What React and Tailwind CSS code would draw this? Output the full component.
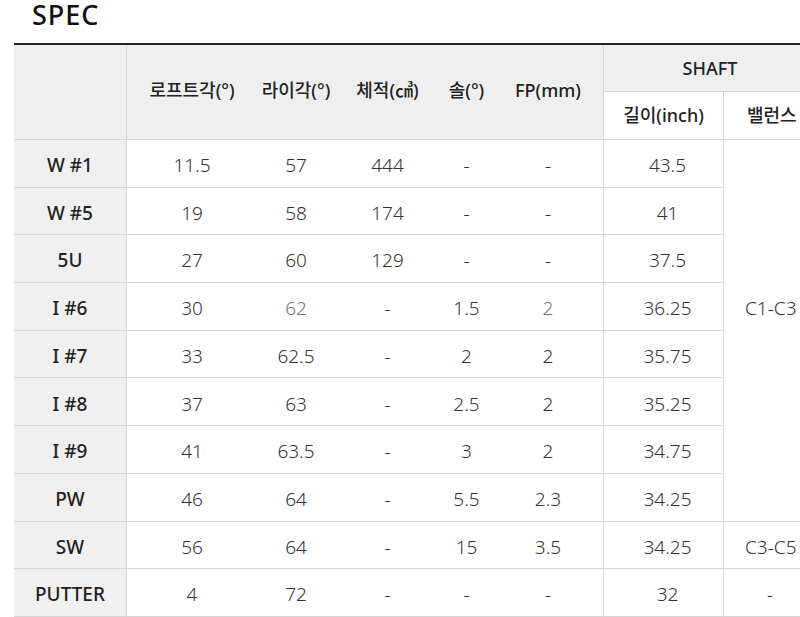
const font = { fontFamily: '"Noto Sans", "Noto Sans CJK KR", sans-serif' }

const rows = [
  { name: 'W #1', loft: '11.5', lie: '57', vol: '444', sole: '-', fp: '-', len: '43.5' },
  { name: 'W #5', loft: '19', lie: '58', vol: '174', sole: '-', fp: '-', len: '41' },
  { name: '5U', loft: '27', lie: '60', vol: '129', sole: '-', fp: '-', len: '37.5' },
  { name: 'I #6', loft: '30', lie: '62', vol: '-', sole: '1.5', fp: '2', len: '36.25', faint: true },
  { name: 'I #7', loft: '33', lie: '62.5', vol: '-', sole: '2', fp: '2', len: '35.75' },
  { name: 'I #8', loft: '37', lie: '63', vol: '-', sole: '2.5', fp: '2', len: '35.25' },
  { name: 'I #9', loft: '41', lie: '63.5', vol: '-', sole: '3', fp: '2', len: '34.75' },
  { name: 'PW', loft: '46', lie: '64', vol: '-', sole: '5.5', fp: '2.3', len: '34.25' },
  { name: 'SW', loft: '56', lie: '64', vol: '-', sole: '15', fp: '3.5', len: '34.25' },
  { name: 'PUTTER', loft: '4', lie: '72', vol: '-', sole: '-', fp: '-', len: '32' },
]

const cell = 'flex items-center justify-center border-b border-[#d6d6d6]'
const head = 'text-[18px] font-medium text-[#222]'
const data = `${cell} bg-white pt-[4px] text-[19px] font-light text-[#333]`

export default function App() {
  return (
    <div className="w-[800px] h-[617px] overflow-hidden bg-white" style={font}>
      <div className="h-[43px]">
        <h1 className="pl-[32px] text-[27px] leading-[30px] font-medium tracking-[1px] text-[#111]">SPEC</h1>
      </div>
      <div className="ml-[14px] w-[802px] border-t-2 border-[#222] grid grid-cols-[113px_130px_78px_105px_53px_111px_120px_92px] grid-rows-[47px_48px_repeat(10,47.7px)]">
        <div className={`${cell} row-span-2 bg-[#efefef] border-r`} />
        {['로프트각(°)', '라이각(°)', '체적(㎤)', '솔(°)', 'FP(mm)'].map((h, i) => (
          <div
            key={h}
            className={`${cell} ${head} row-span-2 bg-[#efefef] pb-[4px] ${i === 4 ? 'border-r' : ''}`}
          >
            {h}
          </div>
        ))}
        <div className={`${cell} ${head} col-span-2 bg-[#efefef]`}>SHAFT</div>
        <div className={`${cell} ${head} bg-white border-r`}>길이(inch)</div>
        <div className={`${cell} ${head} bg-white justify-start pl-[23px]`}>밸런스</div>

        {rows.map((r, i) => (
          <div key={r.name} className="contents">
            <div className={`${cell} bg-[#f0f0f0] border-r pt-[4px] text-[19px] font-medium text-[#222]`}>{r.name}</div>
            <div className={data}>{r.loft}</div>
            <div className={`${data} ${r.faint ? 'text-[#777]' : ''}`}>{r.lie}</div>
            <div className={data}>{r.vol}</div>
            <div className={data}>{r.sole}</div>
            <div className={`${data} border-r ${r.faint ? 'text-[#777]' : ''}`}>{r.fp}</div>
            <div className={`${data} border-r pl-[8px]`}>{r.len}</div>
            {i === 0 && (
              <div className={`${data} row-span-8 items-start justify-start pl-[21px] pt-[154px]`}>C1-C3</div>
            )}
            {i === 8 && <div className={`${data} justify-start pl-[21px]`}>C3-C5</div>}
            {i === 9 && <div className={`${data} justify-start pl-[43px]`}>-</div>}
          </div>
        ))}
      </div>
    </div>
  )
}
